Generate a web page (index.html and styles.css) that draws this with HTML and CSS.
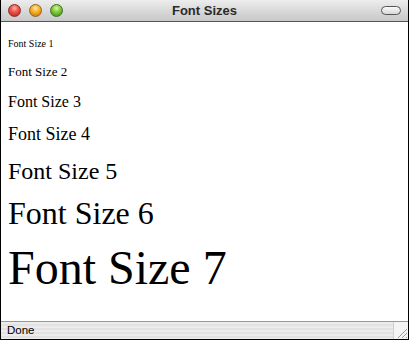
FILE: index.html
```html
<html><head>
  <title>Font Sizes</title>
  <link rel="stylesheet" href="styles.css">
</head>
<body>
  <div class="window">
    <div class="titlebar">
      <div class="lights">
        <span class="light close"></span>
        <span class="light minimize"></span>
        <span class="light zoom"></span>
      </div>
      <div class="title">Font Sizes</div>
      <div class="toolbar-toggle"><span class="pill"></span></div>
    </div>

    <div class="content">
      <div class="line size1">Font Size 1</div>
      <div class="line size2">Font Size 2</div>
      <div class="line size3">Font Size 3</div>
      <div class="line size4">Font Size 4</div>
      <div class="line size5">Font Size 5</div>
      <div class="line size6">Font Size 6</div>
      <div class="line size7">Font Size 7</div>
    </div>

    <div class="statusbar">
      <div class="status-text">Done</div>
      <div class="grip">
        <svg width="14" height="14" viewBox="0 0 14 14">
          <line x1="13" y1="4" x2="4" y2="13" stroke="#999" stroke-width="1"/>
          <line x1="13" y1="8" x2="8" y2="13" stroke="#999" stroke-width="1"/>
          <line x1="13" y1="12" x2="12" y2="13" stroke="#999" stroke-width="1"/>
        </svg>
      </div>
    </div>
  </div>
</body></html>
```
FILE: styles.css
```css
* {
  margin: 0;
  padding: 0;
  box-sizing: border-box;
}

body {
  background: white;
  font-family: 'Liberation Sans', Arial, sans-serif;
}

.window {
  width: 409px;
  height: 340px;
  display: flex;
  flex-direction: column;
  border-left: 1px solid #000;
  border-right: 1px solid #000;
  border-bottom: 1px solid #000;
}

.titlebar {
  height: 22px;
  flex: none;
  display: grid;
  grid-template-columns: 1fr auto 1fr;
  align-items: center;
  background: linear-gradient(#ededed, #d6d6d6 60%, #c8c8c8);
  border-bottom: 1px solid #555;
}

.lights {
  display: flex;
  gap: 8px;
  padding-left: 7px;
}

.light {
  width: 13px;
  height: 13px;
  border-radius: 50%;
  display: block;
}

.close {
  background: radial-gradient(circle at 50% 30%, #ffb0a8 0, #f0554a 40%, #b3201a 100%);
  border: 1px solid #8c2a24;
}

.minimize {
  background: radial-gradient(circle at 50% 30%, #ffe6a6 0, #f6b330 40%, #c06e00 100%);
  border: 1px solid #99641a;
}

.zoom {
  background: radial-gradient(circle at 50% 30%, #d8f5a8 0, #86cc3c 40%, #2f8a10 100%);
  border: 1px solid #3f7020;
}

.title {
  font-size: 13px;
  font-weight: bold;
  color: #2a2a2a;
  padding-bottom: 1px;
}

.toolbar-toggle {
  display: flex;
  justify-content: flex-end;
  padding-right: 7px;
}

.pill {
  display: block;
  width: 20px;
  height: 9px;
  border: 1px solid #555;
  border-radius: 5px;
  background: linear-gradient(#fafafa, #d8d8d8);
}

.content {
  flex: 1;
  background: white;
  padding-left: 7px;
  padding-top: 17px;
  font-family: 'Liberation Serif', 'Times New Roman', serif;
  color: #000;
}

.line {
  line-height: 1;
  white-space: nowrap;
}

.size1 { font-size: 10px; }
.size2 { font-size: 13px; margin-top: 16px; }
.size3 { font-size: 16px; margin-top: 16px; }
.size4 { font-size: 18px; margin-top: 15px; }
.size5 { font-size: 24px; margin-top: 16px; }
.size6 { font-size: 32px; margin-top: 14px; }
.size7 { font-size: 48px; margin-top: 15px; }

.statusbar {
  height: 18px;
  flex: none;
  display: flex;
  align-items: stretch;
  border-top: 1px solid #999;
  background: repeating-linear-gradient(#ececec 0, #ececec 2px, #e2e2e2 2px, #e2e2e2 4px);
}

.status-text {
  flex: 1;
  font-size: 11.5px;
  color: #000;
  padding-left: 6px;
  line-height: 17px;
}

.grip {
  width: 15px;
  border-left: 1px solid #d0d0d0;
  display: flex;
  align-items: flex-end;
  justify-content: flex-end;
  background: #f4f4f4;
}

.grip svg {
  display: block;
}
```
